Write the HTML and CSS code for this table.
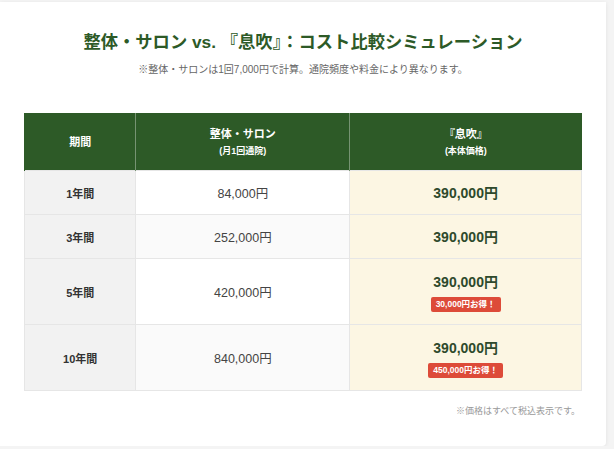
FILE: index.html
```html
<!DOCTYPE html>
<html lang="ja">
<head>
<meta charset="utf-8">
<title>コスト比較シミュレーション</title>
<link rel="stylesheet" href="styles.css">
</head>
<body>
<div class="page">
  <section class="card">
    <h2 class="title">整体・サロン vs. 『息吹』：コスト比較シミュレーション</h2>
    <p class="lead">※整体・サロンは1回7,000円で計算。通院頻度や料金により異なります。</p>
    <table class="cost">
      <colgroup>
        <col class="c1"><col class="c2"><col class="c3">
      </colgroup>
      <thead>
        <tr>
          <th>期間</th>
          <th>整体・サロン<span class="sub">(月1回通院)</span></th>
          <th>『息吹』<span class="sub">(本体価格)</span></th>
        </tr>
      </thead>
      <tbody>
        <tr class="short">
          <td class="period">1年間</td>
          <td class="salon">84,000円</td>
          <td class="ibuki"><span class="price">390,000円</span></td>
        </tr>
        <tr class="short alt">
          <td class="period">3年間</td>
          <td class="salon">252,000円</td>
          <td class="ibuki"><span class="price">390,000円</span></td>
        </tr>
        <tr class="tall">
          <td class="period">5年間</td>
          <td class="salon">420,000円</td>
          <td class="ibuki"><span class="price">390,000円</span><span class="badge">30,000円お得！</span></td>
        </tr>
        <tr class="tall alt">
          <td class="period">10年間</td>
          <td class="salon">840,000円</td>
          <td class="ibuki"><span class="price">390,000円</span><span class="badge">450,000円お得！</span></td>
        </tr>
      </tbody>
    </table>
    <p class="note">※価格はすべて税込表示です。</p>
  </section>
</div>
</body>
</html>
```

FILE: styles.css
```css
html, body {
  margin: 0;
  padding: 0;
  background: #f4f4f4;
  font-family: "Liberation Sans", "Noto Sans CJK JP", sans-serif;
  color: #333;
}

.page {
  padding-top: 2px;
}

.card {
  width: 606px;
  box-sizing: border-box;
  background: #fff;
  padding: 27px 24px 28px;
  box-shadow: 0 1px 4px rgba(0, 0, 0, 0.08);
  border-radius: 0 0 4px 0;
}

.title {
  margin: 0;
  text-align: center;
  font-size: 17.3px;
  line-height: 26px;
  font-weight: 700;
  color: #2d5a27;
}

.lead {
  margin: 7px 0 0;
  text-align: center;
  font-size: 10px;
  line-height: 16px;
  color: #666;
}

.cost {
  width: 100%;
  margin-top: 35px;
  border-collapse: collapse;
  table-layout: fixed;
}

.c1 { width: 20%; }
.c2 { width: 38.4%; }
.c3 { width: 41.6%; }

.cost th {
  background: #2d5a27;
  color: #fff;
  height: 57px;
  padding: 0;
  font-size: 11px;
  line-height: 18px;
  font-weight: 700;
  border-left: 1px solid rgba(255, 255, 255, 0.35);
  text-align: center;
  vertical-align: middle;
}

.cost th:first-child {
  border-left: 1px solid #2d5a27;
}

.cost th .sub {
  display: block;
  font-size: 9px;
  line-height: 16px;
}

.cost td {
  border: 1px solid #e6e6e6;
  text-align: center;
  vertical-align: middle;
  padding: 0;
}

.short td { height: 43px; }
.tall td { height: 65px; }

.period {
  background: #f2f2f2;
  font-weight: 700;
  font-size: 11px;
  color: #333;
}

.salon {
  background: #fff;
  font-size: 12.5px;
  color: #444;
}

.alt .salon {
  background: #fafafa;
}

.ibuki {
  background: #fcf6e3;
}

.price {
  display: block;
  font-size: 14px;
  line-height: 22px;
  font-weight: 700;
  color: #2e4a2c;
}

.badge {
  display: inline-block;
  margin-top: 3px;
  padding: 0 5px;
  background: #dd4b39;
  color: #fff;
  font-size: 8.5px;
  line-height: 15px;
  font-weight: 700;
  border-radius: 2px;
}

.note {
  margin: 13px 2px 0 0;
  text-align: right;
  font-size: 9px;
  line-height: 14px;
  color: #999;
}
```
